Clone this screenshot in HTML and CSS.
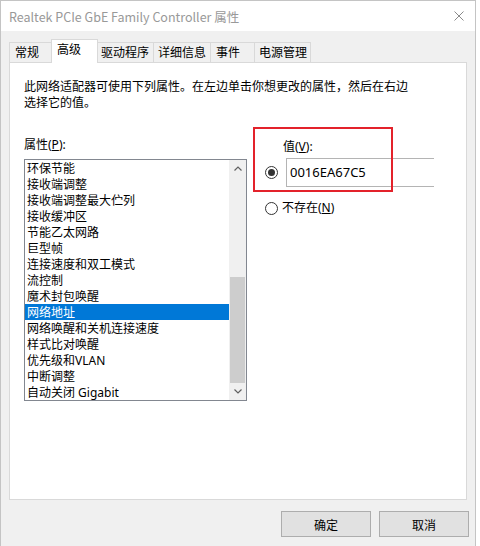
FILE: index.html
```html
<!DOCTYPE html>
<html lang="zh-CN">
<head>
<meta charset="utf-8">
<title>属性</title>
<link rel="stylesheet" href="styles.css">
</head>
<body>
<div class="window">
  <div class="titlebar">
    <span class="title">Realtek PCIe GbE Family Controller 属性</span>
    <svg class="close" width="10" height="10" viewBox="0 0 10 10"><path d="M0.5 0.5L9.5 9.5M9.5 0.5L0.5 9.5" stroke="#8a8a8a" stroke-width="1" fill="none"/></svg>
  </div>
  <div class="client">
    <div class="tabs">
      <div class="tab t1">常规</div>
      <div class="tab t2 active">高级</div>
      <div class="tab t3">驱动程序</div>
      <div class="tab t4">详细信息</div>
      <div class="tab t5">事件</div>
      <div class="tab t6">电源管理</div>
    </div>
    <div class="panel">
      <p class="desc">此网络适配器可使用下列属性。在左边单击你想更改的属性，然后在右边<br>选择它的值。</p>
      <div class="content">
        <div class="left">
          <div class="label">属性(<u>P</u>):</div>
          <div class="listbox">
            <ul class="items">
              <li>环保节能</li>
              <li>接收端调整</li>
              <li>接收端调整最大伫列</li>
              <li>接收缓冲区</li>
              <li>节能乙太网路</li>
              <li>巨型帧</li>
              <li>连接速度和双工模式</li>
              <li>流控制</li>
              <li>魔术封包唤醒</li>
              <li class="selected">网络地址</li>
              <li>网络唤醒和关机连接速度</li>
              <li>样式比对唤醒</li>
              <li>优先级和VLAN</li>
              <li>中断调整</li>
              <li>自动关闭 Gigabit</li>
            </ul>
            <div class="scrollbar">
              <div class="sb-btn"><svg width="8" height="5" viewBox="0 0 8 5"><path d="M0.5 4.5L4 1L7.5 4.5" stroke="#606060" stroke-width="1.2" fill="none"/></svg></div>
              <div class="sb-track"><div class="sb-thumb"></div></div>
              <div class="sb-btn"><svg width="8" height="5" viewBox="0 0 8 5"><path d="M0.5 0.5L4 4L7.5 0.5" stroke="#606060" stroke-width="1.2" fill="none"/></svg></div>
            </div>
          </div>
        </div>
        <div class="right">
          <div class="label vlabel">值(<u>V</u>):</div>
          <div class="row value-row">
            <span class="radio checked"></span>
            <div class="textbox">0016EA67C5</div>
          </div>
          <div class="row none-row">
            <span class="radio"></span>
            <span class="radio-label">不存在(<u>N</u>)</span>
          </div>
        </div>
      </div>
      <div class="highlight"></div>
    </div>
  </div>
  <div class="buttons">
    <button class="btn">确定</button>
    <button class="btn">取消</button>
  </div>
</div>
</body>
</html>
```

FILE: styles.css
```css
* { box-sizing: border-box; }
html, body { margin: 0; padding: 0; }
body {
  width: 480px;
  height: 546px;
  background: #ffffff;
  font-family: "Noto Sans", "Noto Sans CJK SC", sans-serif;
  font-size: 12px;
  color: #000;
  overflow: hidden;
}
.window {
  width: 476px;
  height: 546px;
  border: 1px solid #c4c4c4;
  border-bottom: none;
  background: #f0f0f0;
  display: flex;
  flex-direction: column;
}
.titlebar {
  height: 30px;
  background: #ffffff;
  display: flex;
  align-items: center;
  padding-left: 8px;
  flex: none;
}
.title {
  color: #999999;
  font-family: "Noto Sans CJK SC", sans-serif;
  font-size: 12.5px;
  white-space: nowrap;
}
.close {
  margin-left: auto;
  margin-right: 11px;
}
.client {
  padding: 8px 8px 0 8px;
}
.tabs {
  display: flex;
  align-items: flex-end;
  height: 23px;
}
.tab {
  height: 20px;
  line-height: 19px;
  border: 1px solid #d9d9d9;
  border-bottom: none;
  margin-right: -1px;
  background: #f0f0f0;
  white-space: nowrap;
}
.tab.active {
  height: 24px;
  line-height: 20px;
  margin-bottom: -1px;
  background: #ffffff;
  position: relative;
  z-index: 1;
}
.t1 { width: 43px; padding-left: 5px; }
.t2 { width: 47px; padding-left: 5px; }
.t3 { width: 57px; padding-left: 3px; }
.t4 { width: 58px; padding-left: 4px; }
.t5 { width: 45px; padding-left: 5px; }
.t6 { width: 57px; padding-left: 4px; }
.panel {
  position: relative;
  width: 458px;
  height: 438px;
  border: 1px solid #d9d9d9;
  background: #ffffff;
  padding: 16px 13px 0 14px;
}
.desc {
  margin: 0;
  line-height: 16px;
  white-space: nowrap;
}
.content {
  display: flex;
  margin-top: 26px;
}
.left {
  width: 223px;
  flex: none;
}
.label {
  line-height: 16px;
  height: 16px;
}
.listbox {
  margin-top: 6px;
  width: 223px;
  height: 242px;
  border: 1px solid #828790;
  display: flex;
}
.items {
  list-style: none;
  margin: 0;
  padding: 0;
  width: 204px;
}
.items li {
  height: 16px;
  line-height: 17px;
  padding-left: 2px;
  white-space: nowrap;
}
.items li.selected {
  background: #0078d7;
  color: #ffffff;
}
.scrollbar {
  width: 17px;
  display: flex;
  flex-direction: column;
  background: #f0f0f0;
}
.sb-btn {
  height: 17px;
  display: flex;
  align-items: center;
  justify-content: center;
  flex: none;
}
.sb-track {
  flex: 1;
  padding-top: 100px;
}
.sb-thumb {
  margin: 0 1px;
  height: 106px;
  background: #cdcdcd;
}
.right {
  margin-left: 18px;
  padding-top: 2px;
}
.vlabel {
  padding-left: 18px;
}
.row {
  display: flex;
  align-items: center;
}
.value-row {
  margin-top: 3px;
}
.none-row {
  margin-top: 13px;
  height: 16px;
}
.radio {
  width: 13px;
  height: 13px;
  border: 1px solid #333333;
  border-radius: 50%;
  background: #ffffff;
  display: flex;
  align-items: center;
  justify-content: center;
  flex: none;
}
.radio.checked::after {
  content: "";
  width: 7px;
  height: 7px;
  border-radius: 50%;
  background: #333333;
}
.radio-label {
  margin-left: 4px;
  line-height: 16px;
}
.textbox {
  margin-left: 8px;
  width: 148px;
  height: 29px;
  border: 1px solid #b4b4b4;
  border-right: none;
  padding-left: 3px;
  line-height: 27px;
  font-size: 13px;
}
.highlight {
  position: absolute;
  left: 243px;
  top: 64px;
  width: 140px;
  height: 65px;
  border: 2px solid #e3222b;
}
.buttons {
  display: flex;
  justify-content: flex-end;
  gap: 8px;
  margin-top: 11px;
  padding-right: 6px;
}
.btn {
  width: 90px;
  height: 26px;
  background: #e1e1e1;
  border: 1px solid #adadad;
  font-family: "Noto Sans CJK SC", sans-serif;
  font-size: 12px;
  color: #000;
  padding: 0;
}
```
